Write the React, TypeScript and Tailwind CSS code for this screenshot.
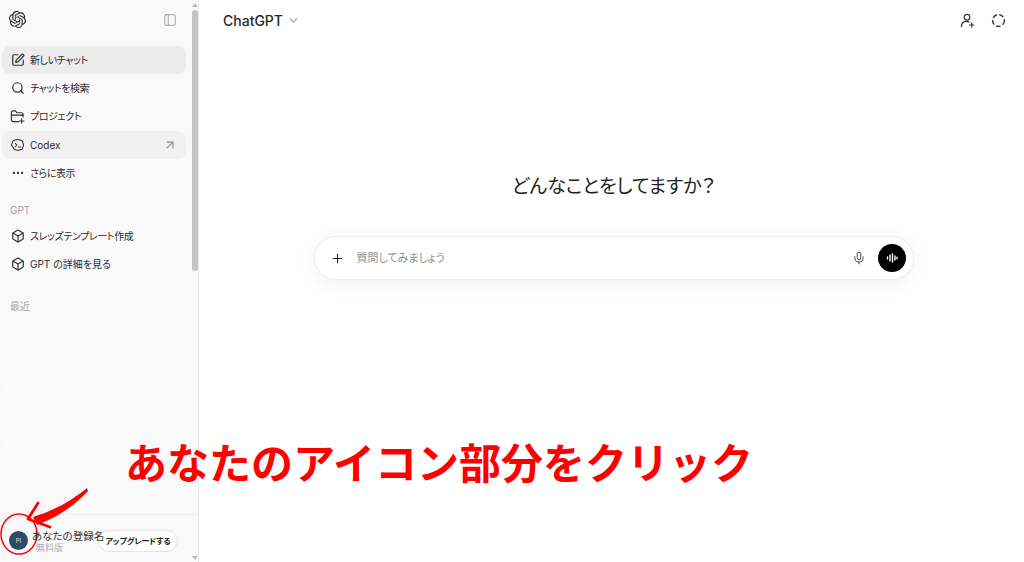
import {
  ArrowUpRight,
  Box,
  ChevronDown,
  Ellipsis,
  Mic,
  PanelLeft,
  Plus,
  Search,
  SquarePen,
} from "lucide-react";
import { SiOpenai } from "react-icons/si";

const FONT =
  "font-['Inter','Noto_Sans_CJK_JP',sans-serif] [font-feature-settings:'palt']";

function CodexIcon() {
  return (
    <svg viewBox="0 0 16 16" className="h-[14px] w-[14px]" fill="none" stroke="currentColor" strokeWidth="1.2">
      <path d="M8 1.600c1 0 1.600.5 2.400.8.9.2 1.700.2 2.300.9.600.7.600 1.400.900 2.200.2.800.700 1.400.700 2.500s-.5 1.700-.8 2.500c-.2.800-.2 1.500-.9 2.100-.7.700-1.400.6-2.200.9-.8.2-1.400.7-2.400.7s-1.600-.5-2.400-.7c-.8-.3-1.500-.2-2.200-.9-.7-.6-.7-1.300-.9-2.100C1.200 9.700.7 9.100.7 8s.5-1.700.8-2.500c.2-.8.2-1.500.9-2.200.6-.7 1.400-.7 2.200-.9C5.400 2.100 7 1.600 8 1.600Z" />
      <path d="M5 6.200 6.800 8 5 9.800M8.500 10.200h2.500" strokeLinecap="round" strokeLinejoin="round" />
    </svg>
  );
}

function ProjectIcon() {
  return (
    <svg viewBox="0 0 16 16" className="h-[15px] w-[15px]" fill="none" stroke="currentColor" strokeWidth="1.2" strokeLinecap="round" strokeLinejoin="round">
      <path d="M9 13.500H3.500a2 2 0 0 1-2-2v-8a1.500 1.500 0 0 1 1.500-1.500h2.800l1.500 2h5a1.500 1.500 0 0 1 1.500 1.500v3M1.500 6.500h13" />
      <path d="M12.500 10.500v4.500M10.200 12.800h4.600" />
    </svg>
  );
}

const topItems = [
  { label: "新しいチャット", icon: <SquarePen size={14} />, bg: "bg-[#ececec]" },
  { label: "チャットを検索", icon: <Search size={14} />, bg: "" },
  { label: "プロジェクト", icon: <ProjectIcon />, bg: "" },
  {
    label: "Codex",
    icon: <CodexIcon />,
    bg: "bg-[#f1f1f1]",
    text: "tracking-normal",
    trailing: <ArrowUpRight size={14} className="text-[#8e8e8e]" />,
  },
  { label: "さらに表示", icon: <Ellipsis size={14} />, bg: "" },
];

const gptItems = [
  { label: "スレッズテンプレート作成", text: "tracking-[-0.4px]" },
  { label: "GPT の詳細を見る", text: "tracking-normal" },
];

function NavRow({
  label,
  icon,
  bg = "",
  text = "tracking-[-0.4px]",
  trailing,
}: {
  label: string;
  icon: React.ReactNode;
  bg?: string;
  text?: string;
  trailing?: React.ReactNode;
}) {
  return (
    <div className={`flex h-[28.2px] items-center gap-[5px] rounded-lg pl-[8px] pr-[9px] text-[10px] text-[#2b2b2b] ${bg}`}>
      <span className="flex w-[15px] justify-center text-[#303030]">{icon}</span>
      <span className={`flex-1 pt-[1px] ${text}`}>{label}</span>
      {trailing}
    </div>
  );
}

function Sidebar() {
  return (
    <aside className="flex h-full w-[199px] shrink-0 flex-col border-r border-[#ececec] bg-[#f9f9f9]">
      <div className="flex h-[46px] items-start justify-between pl-[9px] pr-[21px] pt-[11px]">
        <SiOpenai size={17} className="text-[#222]" />
        <PanelLeft size={14} strokeWidth={1.3} className="mt-[2px] text-[#8a8a8a]" />
      </div>
      <nav className="ml-[2px] mr-[12px] flex flex-col">
        {topItems.map((item) => (
          <NavRow key={item.label} {...item} />
        ))}
      </nav>
      <div className="pl-[10px] pt-[16px] text-[10px] leading-[14px] text-[#a0a0a0]">GPT</div>
      <div className="ml-[2px] mr-[12px] mt-[5px] flex flex-col">
        {gptItems.map((item) => (
          <NavRow key={item.label} {...item} icon={<Box size={14} />} />
        ))}
      </div>
      <div className="pl-[10px] pt-[21px] text-[10px] leading-[14px] text-[#a8a8a8]">最近</div>
      <div className="ml-[4px] mt-[10px] flex flex-1 flex-col gap-[20px] opacity-30 blur-[2px]">
        <div className="h-[12px] w-[100px] bg-white" />
        <div className="h-[10px] w-[96px] bg-white" />
        <div className="h-[8px] w-[70px] bg-white" />
        <div className="h-[8px] w-[108px] bg-white" />
        <div className="h-[8px] w-[100px] bg-white" />
      </div>
      <div className="mr-[1px] flex h-[48px] items-start border-t border-[#eeeeee] pl-[9px] pt-[15px]">
        <div className="mt-[1px] flex h-[19px] w-[19px] shrink-0 items-center justify-center rounded-full bg-[#2f4a63] text-[6px] text-[#d8dee4]">
          PI
        </div>
        <div className="relative z-20 ml-[4px] w-[66px] shrink-0 whitespace-nowrap">
          <div className="text-[10.5px] leading-[13px] text-[#333]">あなたの登録名</div>
          <div className="pl-[4px] text-[9px] leading-[10px] text-[#b0b0b0]">無料版</div>
        </div>
        <div className="relative z-10 flex h-[22px] w-[80px] shrink-0 items-center justify-center rounded-full border border-[#e5e5e5] bg-white text-[8px] font-bold tracking-[-0.1px] text-[#222]">
          アップグレードする
        </div>
      </div>
    </aside>
  );
}

function Composer() {
  return (
    <div className="flex h-[44px] w-[600px] items-center rounded-full border border-[#ececec] bg-white pl-[15px] pr-[7px] shadow-[0_4px_20px_rgba(0,0,0,0.06)]">
      <Plus size={15} strokeWidth={1.6} className="text-[#222]" />
      <span className="ml-[12px] flex-1 text-[11px] text-[#8f8f8f]">質問してみましょう</span>
      <Mic size={14} strokeWidth={1.5} className="mr-[12px] text-[#333]" />
      <div className="flex h-[28px] w-[28px] items-center justify-center rounded-full bg-black">
        <svg viewBox="0 0 14 14" className="h-[14px] w-[14px]" stroke="white" strokeWidth="1.4" strokeLinecap="round">
          <path d="M2.500 6v2M5 4v6M7.500 3v8M10 5v4M12 6.300v1.400" />
        </svg>
      </div>
    </div>
  );
}

function Main() {
  return (
    <main className="flex min-w-0 flex-1 flex-col bg-white">
      <header className="flex h-[41px] items-center justify-between pl-[24px] pr-[18px]">
        <div className="flex items-center gap-[4px] text-[14px] font-medium text-[#2a2a2a]">
          ChatGPT
          <ChevronDown size={13} className="text-[#9a9a9a]" />
        </div>
        <div className="flex items-center gap-[16px] text-[#333]">
          <svg viewBox="0 0 16 16" className="h-[15px] w-[15px]" fill="none" stroke="currentColor" strokeWidth="1.300" strokeLinecap="round">
            <circle cx="7.500" cy="4.500" r="3" />
            <path d="M1.500 14.500c0-3.300 2.300-5.500 5.500-5.500 1 0 1.800.2 2.500.6M12.500 10.500v4.500M10.300 12.800h4.500" />
          </svg>
          <svg viewBox="0 0 16 16" className="h-[15px] w-[15px]" fill="none" stroke="currentColor" strokeWidth="1.500">
            <circle cx="8" cy="8" r="6.300" strokeDasharray="5 2.400" />
          </svg>
        </div>
      </header>
      <div className="flex flex-col items-center pl-[4px] pt-[132px]">
        <h1 className="text-[19px] font-normal leading-[28px] text-[#1f1f1f]">どんなことをしてますか？</h1>
        <div className="mt-[35px]">
          <Composer />
        </div>
      </div>
    </main>
  );
}

function Annotations() {
  return (
    <>
      <div className="absolute left-[125px] top-[436px] whitespace-nowrap text-[42px] font-bold leading-[56px] text-[#ff0000] [font-feature-settings:normal]">
        あなたのアイコン部分をクリック
      </div>
      <svg className="absolute left-0 top-[485px] h-[77px] w-[95px]" viewBox="0 485 95 77" fill="none">
        <path d="M87 488C72 500 58 509 33 517L37 525C55 518 72 508 88 491Z" fill="#ff0000" />
        <path d="M38 503L28 519L50 527" stroke="#ff0000" strokeWidth="2.800" strokeLinecap="round" strokeLinejoin="round" />
        <ellipse cx="19" cy="534" rx="18" ry="20" stroke="#ff0000" strokeWidth="1.500" />
      </svg>
    </>
  );
}

export default function App() {
  return (
    <div className={`relative flex h-[562px] w-[1024px] overflow-hidden ${FONT}`}>
      <Sidebar />
      <Main />
      {/* sidebar scrollbar */}
      <div className="absolute left-[192px] top-[10px] h-[261px] w-[6px] rounded-full bg-[#c4c4c4]" />
      <div className="absolute left-[192px] top-[3px] h-0 w-0 border-x-[3px] border-b-[4px] border-x-transparent border-b-[#b8b8b8]" />
      <div className="absolute left-[192px] top-[556px] h-0 w-0 border-x-[3px] border-t-[4px] border-x-transparent border-t-[#b8b8b8]" />
      <Annotations />
    </div>
  );
}
